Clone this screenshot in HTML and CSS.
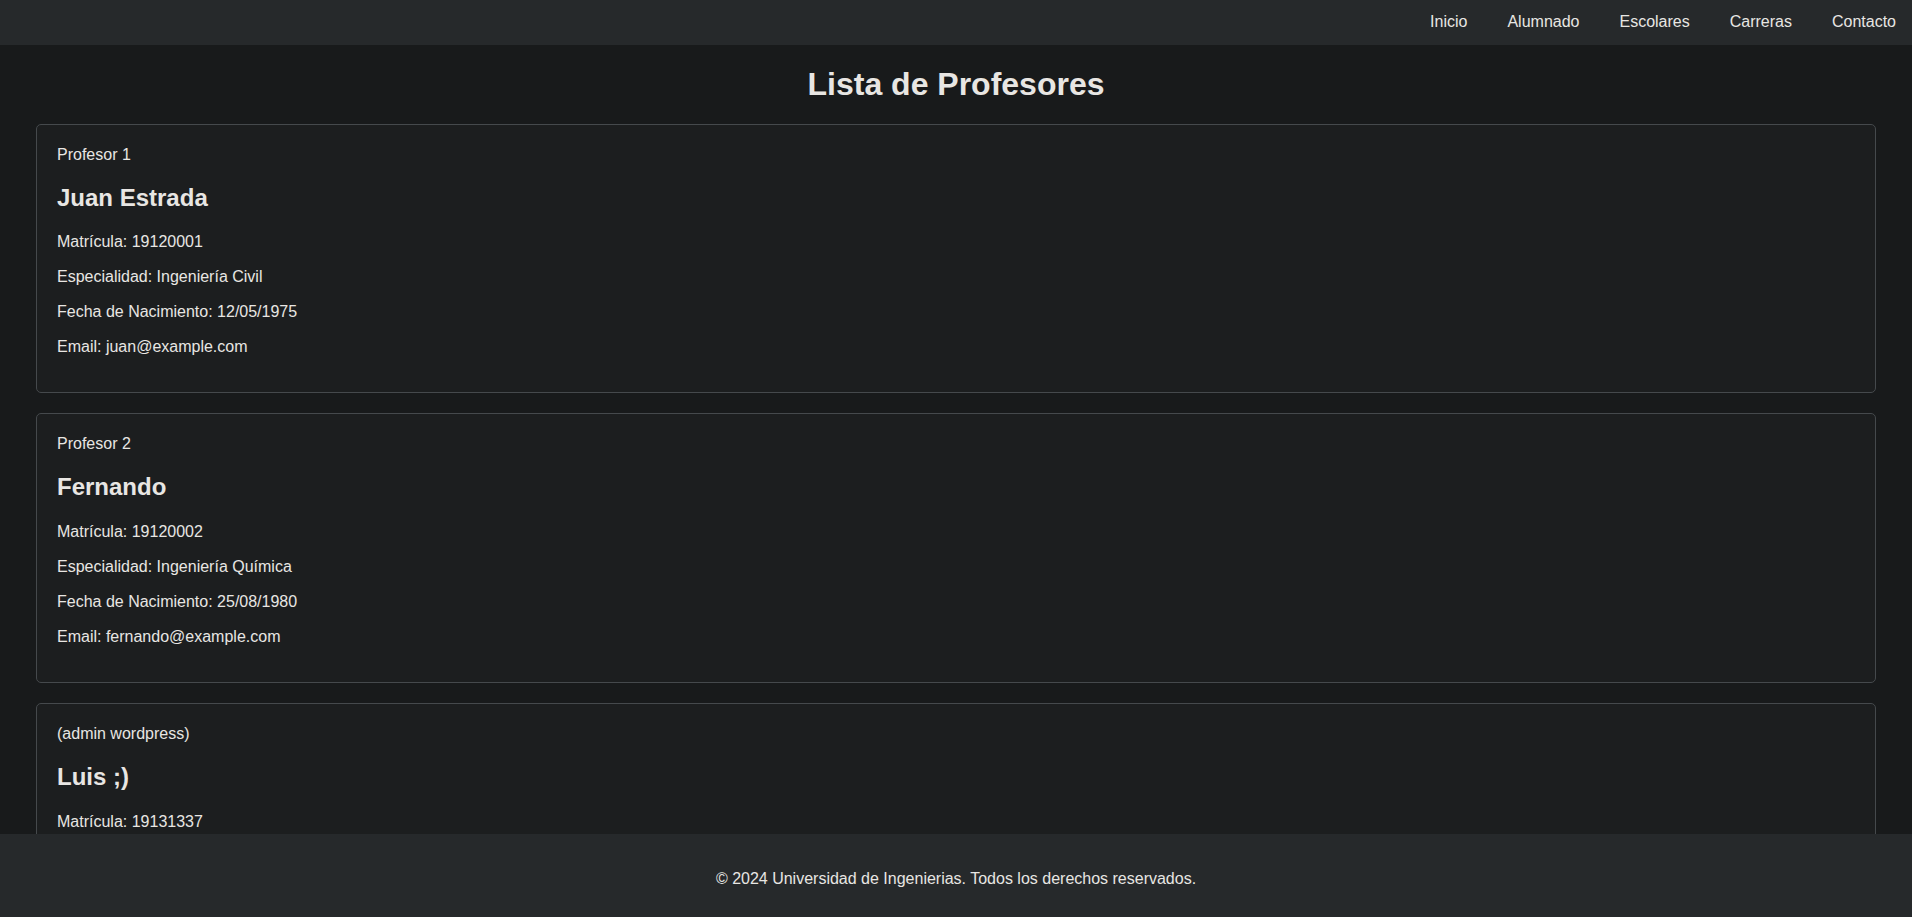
FILE: index.html
```html
<!DOCTYPE html>
<html lang="es">
<head>
<meta charset="utf-8">
<title>Lista de Profesores</title>
<link rel="stylesheet" href="styles.css">
</head>
<body>
<nav class="topnav">
  <a href="#">Inicio</a>
  <a href="#">Alumnado</a>
  <a href="#">Escolares</a>
  <a href="#">Carreras</a>
  <a href="#">Contacto</a>
</nav>
<main class="content">
  <h1 class="title">Lista de Profesores</h1>
  <section class="card">
    <div class="label">Profesor 1</div>
    <h2 class="name">Juan Estrada</h2>
    <p>Matrícula: 19120001</p>
    <p>Especialidad: Ingeniería Civil</p>
    <p>Fecha de Nacimiento: 12/05/1975</p>
    <p>Email: juan@example.com</p>
  </section>
  <section class="card">
    <div class="label">Profesor 2</div>
    <h2 class="name">Fernando</h2>
    <p>Matrícula: 19120002</p>
    <p>Especialidad: Ingeniería Química</p>
    <p>Fecha de Nacimiento: 25/08/1980</p>
    <p>Email: fernando@example.com</p>
  </section>
  <section class="card">
    <div class="label">(admin wordpress)</div>
    <h2 class="name">Luis ;)</h2>
    <p>Matrícula: 19131337</p>
    <p>Especialidad: Ingeniería en Sistemas</p>
    <p>Fecha de Nacimiento: 01/01/1990</p>
    <p>Email: luis@example.com</p>
  </section>
</main>
<footer class="footer">
  <p>© 2024 Universidad de Ingenierias. Todos los derechos reservados.</p>
</footer>
</body>
</html>
```
FILE: styles.css
```css
html, body {
  margin: 0;
  padding: 0;
}
body {
  background: #181a1b;
  color: #e8e6e3;
  font-family: "Liberation Sans", Arial, sans-serif;
  font-size: 16px;
  line-height: 1.15;
}
.topnav {
  display: flex;
  justify-content: flex-end;
  align-items: center;
  gap: 40px;
  height: 45px;
  padding: 0 16px 0 0;
  background: #26292b;
}
.topnav a {
  color: #e8e6e3;
  text-decoration: none;
}
.content {
  padding: 0 36px 100px;
}
.title {
  text-align: center;
  font-size: 32px;
  margin: 21px 0 21px;
}
.card {
  background: #1c1e1f;
  border: 1px solid #45494c;
  border-radius: 5px;
  padding: 20px 20px 20px;
  margin-bottom: 20px;
}
.label {
  line-height: 19px;
}
.name {
  font-size: 24px;
  margin: 20px 0 21px;
}
.card p {
  margin: 16px 0;
  line-height: 19px;
}
.footer {
  position: fixed;
  left: 0;
  right: 0;
  bottom: 0;
  height: 83px;
  box-sizing: border-box;
  padding: 36px 20px 0;
  background: #26292b;
  text-align: center;
}
.footer p {
  margin: 0;
}
```
